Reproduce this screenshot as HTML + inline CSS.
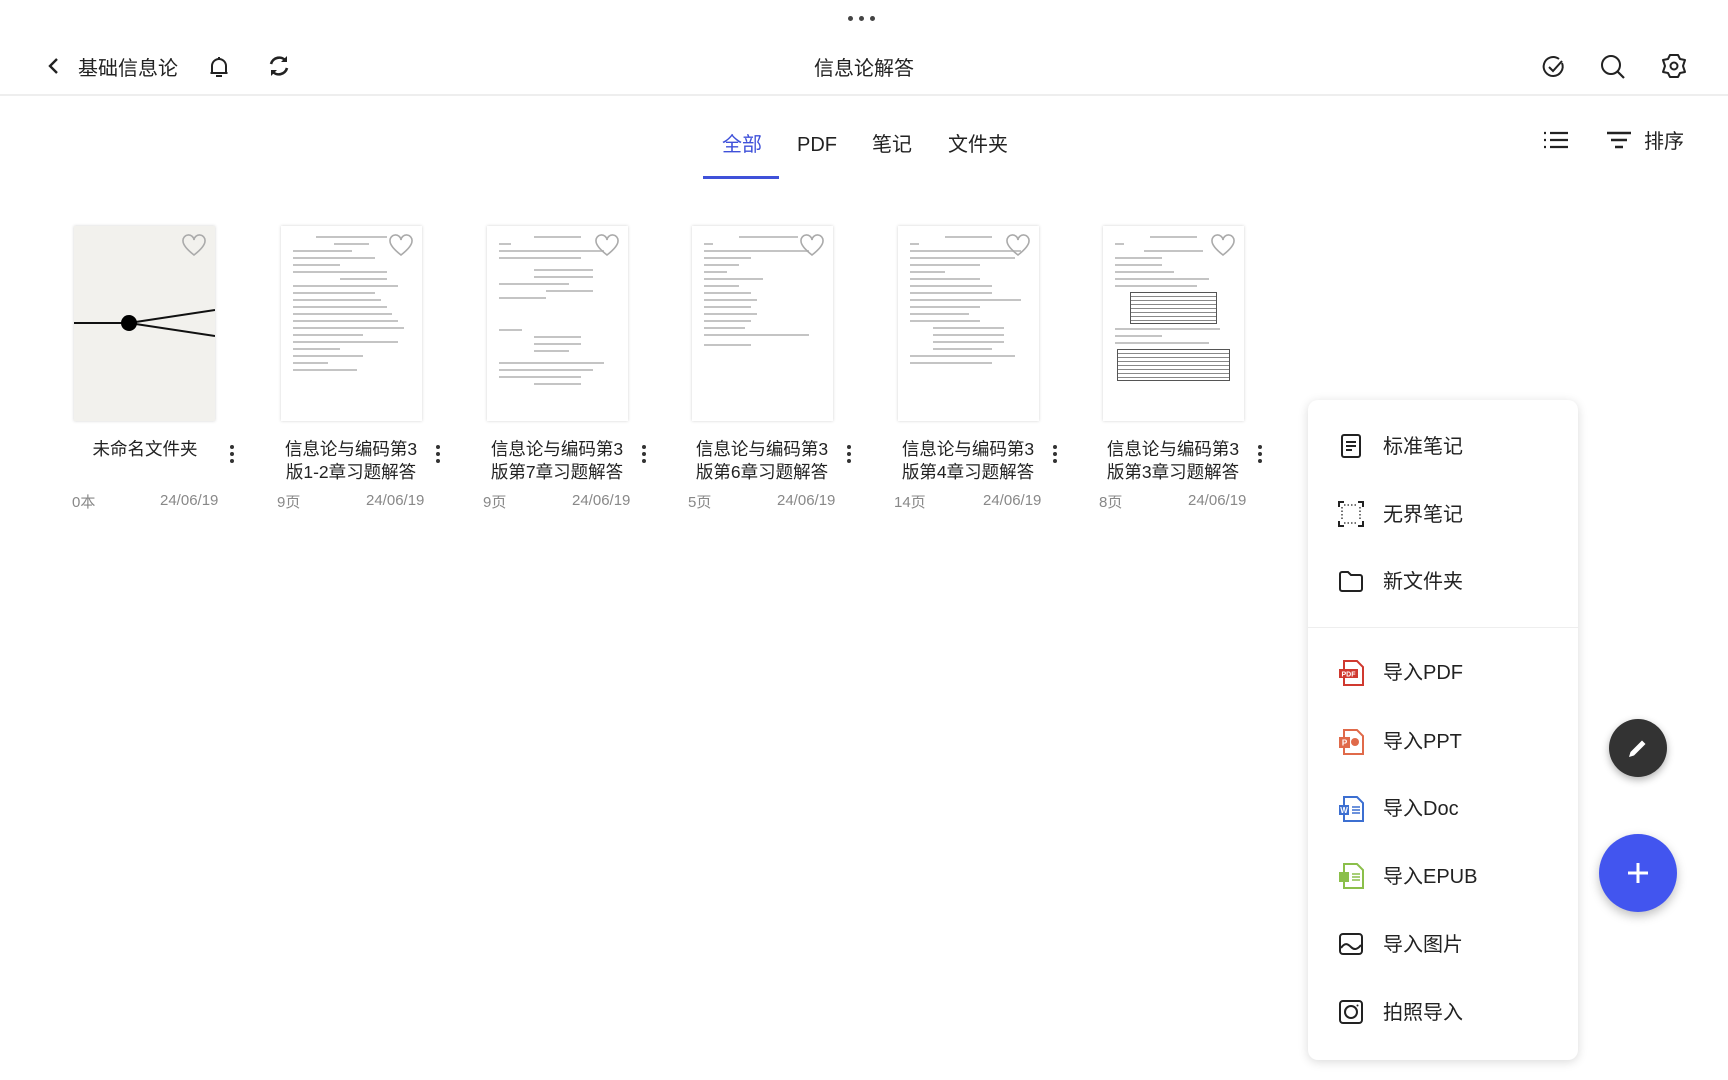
<!DOCTYPE html>
<html><head><meta charset="utf-8">
<style>
*{margin:0;padding:0;box-sizing:border-box}
body{width:1728px;height:1080px;background:#fff;font-family:"Liberation Sans","Noto Sans CJK SC",sans-serif;color:#222;position:relative;overflow:hidden}
.abs{position:absolute}
.hdr{font-size:20px;color:#222;line-height:28px}
.tab{position:absolute;top:131px;font-size:20px;line-height:28px;color:#222}
.card{position:absolute;top:226px;width:141px;height:195px;background:#fff;box-shadow:0 0 3px rgba(0,0,0,.18);overflow:hidden;padding:10px 12px}
.ln{height:2px;background:#c4c4c4;margin:0 0 5px 0}
.heart{position:absolute;top:8px;right:8px}
.title{position:absolute;top:438px;width:150px;text-align:center;font-size:17.5px;line-height:23px;color:#222}
.dots{position:absolute;top:445px;width:4px}
.dots i{display:block;width:4px;height:4px;border-radius:2px;background:#333;margin-bottom:3px}
.meta{position:absolute;top:491px;font-size:15px;color:#888}
.menu{position:absolute;left:1308px;top:400px;width:270px;height:660px;background:#fff;border-radius:10px;box-shadow:0 2px 10px rgba(0,0,0,.15)}
.mi{position:absolute;left:75px;font-size:20px;line-height:28px;color:#222}
.ic{position:absolute;left:30px}
</style></head><body>
<div class="abs" style="left:848px;top:16px;font-size:0">
<span style="display:inline-block;width:5px;height:5px;border-radius:3px;background:#444;margin-right:6px"></span><span style="display:inline-block;width:5px;height:5px;border-radius:3px;background:#444;margin-right:6px"></span><span style="display:inline-block;width:5px;height:5px;border-radius:3px;background:#444"></span>
</div>
<svg class="abs" style="left:46px;top:56px" width="16" height="20" viewBox="0 0 16 20"><path d="M11 3L4 10l7 7" fill="none" stroke="#222" stroke-width="2.4"/></svg>
<div class="abs hdr" style="left:78px;top:55px">基础信息论</div>
<svg class="abs" style="left:206px;top:54px" width="26" height="26" viewBox="0 0 26 26"><path d="M6 19V12a7 7 0 0 1 14 0v7H4.5h17M10 22h6M13 3v2" fill="none" stroke="#222" stroke-width="2"/></svg>
<svg class="abs" style="left:266px;top:53px" width="26" height="26" viewBox="0 0 26 26"><path d="M5 11a8.5 8.5 0 0 1 15-3M21 15a8.5 8.5 0 0 1-15 3" fill="none" stroke="#222" stroke-width="2.6"/><path d="M21 3v6h-6z" fill="#222"/><path d="M5 23v-6h6z" fill="#222"/></svg>
<div class="abs hdr" style="left:814px;top:55px">信息论解答</div>
<svg class="abs" style="left:1541px;top:54px" width="26" height="26" viewBox="0 0 26 26"><path d="M21 9a9.5 9.5 0 1 1-3-4" fill="none" stroke="#222" stroke-width="2"/><path d="M8 13l4 4 9-10" fill="none" stroke="#222" stroke-width="2"/></svg>
<svg class="abs" style="left:1599px;top:53px" width="28" height="28" viewBox="0 0 28 28"><circle cx="12" cy="12" r="9" fill="none" stroke="#222" stroke-width="2"/><path d="M18.5 18.5L25 25" stroke="#222" stroke-width="2.2"/></svg>
<svg class="abs" style="left:1660px;top:52px" width="28" height="28" viewBox="0 0 28 28"><path d="M10 3h8l2 4 5 1-2 6 2 6-5 1-2 4h-8l-2-4-5-1 2-6-2-6 5-1z" fill="none" stroke="#222" stroke-width="2" stroke-linejoin="round"/><circle cx="14" cy="14" r="3.5" fill="none" stroke="#222" stroke-width="2"/></svg>
<div class="abs" style="left:0;top:94px;width:1728px;height:2px;background:#eee"></div>

<div class="tab" style="left:722px;color:#3f51d9">全部</div>
<div class="tab" style="left:797px">PDF</div>
<div class="tab" style="left:872px">笔记</div>
<div class="tab" style="left:948px">文件夹</div>
<div class="abs" style="left:703px;top:176px;width:76px;height:3px;background:#3f51d9"></div>
<svg class="abs" style="left:1543px;top:130px" width="26" height="20" viewBox="0 0 26 20"><path d="M1 3h2M7 3h18M1 10h2M7 10h18M1 17h2M7 17h18" stroke="#222" stroke-width="2.2"/></svg>
<svg class="abs" style="left:1606px;top:130px" width="26" height="20" viewBox="0 0 26 20"><path d="M1 3h24M5 10h16M9 17h8" stroke="#222" stroke-width="2.4"/></svg>
<div class="abs" style="left:1644px;top:128px;font-size:20px;line-height:28px">排序</div>

<div class="card" style="left:74px;background:#f2f1ed;padding:0">
<svg class="abs" style="left:0;top:0" width="141" height="195" viewBox="0 0 141 195"><path d="M0 97h55M55 97L141 84M55 97L141 110" stroke="#111" stroke-width="2"/><circle cx="55" cy="97" r="8" fill="#000"/></svg>
<svg class="heart" width="26" height="24" viewBox="0 0 26 24"><path d="M13 21C4 14 2 10 2 7a5.5 5.5 0 0 1 11-1 5.5 5.5 0 0 1 11 1c0 3-2 7-11 14z" fill="none" stroke="#aaa" stroke-width="1.6"/></svg>
</div>
<div class="title" style="left:70px">未命名文件夹</div>
<div class="dots" style="left:230px"><i></i><i></i><i></i></div>
<div class="meta" style="left:72px">0本</div><div class="meta" style="left:160px;top:492px">24/06/19</div>

<div class="card" style="left:281px"><div class="ln" style="width:60%;margin-left:20%"></div><div class="ln" style="width:30%;margin-left:35%"></div><div class="ln" style="width:50%"></div><div class="ln" style="width:70%"></div><div class="ln" style="width:40%"></div><div class="ln" style="width:80%"></div><div class="ln" style="width:40%;margin-left:40%"></div><div class="ln" style="width:90%"></div><div class="ln" style="width:70%"></div><div class="ln" style="width:75%"></div><div class="ln" style="width:80%"></div><div class="ln" style="width:85%"></div><div class="ln" style="width:90%"></div><div class="ln" style="width:95%"></div><div class="ln" style="width:60%"></div><div class="ln" style="width:90%"></div><div class="ln" style="width:40%"></div><div class="ln" style="width:60%"></div><div class="ln" style="width:30%"></div><div class="ln" style="width:55%"></div>
<svg class="heart" width="26" height="24" viewBox="0 0 26 24"><path d="M13 21C4 14 2 10 2 7a5.5 5.5 0 0 1 11-1 5.5 5.5 0 0 1 11 1c0 3-2 7-11 14z" fill="none" stroke="#aaa" stroke-width="1.6"/></svg></div>
<div class="title" style="left:276px">信息论与编码第3<br>版1-2章习题解答</div>
<div class="dots" style="left:436px"><i></i><i></i><i></i></div>
<div class="meta" style="left:277px">9页</div><div class="meta" style="left:366px;top:492px">24/06/19</div>

<div class="card" style="left:487px"><div class="ln" style="width:40%;margin-left:30%"></div><div class="ln" style="width:10%"></div><div class="ln" style="width:90%"></div><div class="ln" style="width:70%"></div><div class="ln" style="width:50%;margin-left:30%;margin-top:10px"></div><div class="ln" style="width:50%;margin-left:30%"></div><div class="ln" style="width:60%"></div><div class="ln" style="width:40%;margin-left:40%"></div><div class="ln" style="width:40%"></div><div class="ln" style="width:20%;margin-top:30px"></div><div class="ln" style="width:40%;margin-left:30%"></div><div class="ln" style="width:40%;margin-left:30%"></div><div class="ln" style="width:30%;margin-left:30%"></div><div class="ln" style="width:90%;margin-top:10px"></div><div class="ln" style="width:80%"></div><div class="ln" style="width:70%"></div><div class="ln" style="width:40%;margin-left:30%"></div>
<svg class="heart" width="26" height="24" viewBox="0 0 26 24"><path d="M13 21C4 14 2 10 2 7a5.5 5.5 0 0 1 11-1 5.5 5.5 0 0 1 11 1c0 3-2 7-11 14z" fill="none" stroke="#aaa" stroke-width="1.6"/></svg></div>
<div class="title" style="left:482px">信息论与编码第3<br>版第7章习题解答</div>
<div class="dots" style="left:642px"><i></i><i></i><i></i></div>
<div class="meta" style="left:483px">9页</div><div class="meta" style="left:572px;top:492px">24/06/19</div>

<div class="card" style="left:692px"><div class="ln" style="width:50%;margin-left:30%"></div><div class="ln" style="width:8%"></div><div class="ln" style="width:90%"></div><div class="ln" style="width:40%"></div><div class="ln" style="width:30%"></div><div class="ln" style="width:20%"></div><div class="ln" style="width:50%"></div><div class="ln" style="width:30%"></div><div class="ln" style="width:40%"></div><div class="ln" style="width:45%"></div><div class="ln" style="width:40%"></div><div class="ln" style="width:45%"></div><div class="ln" style="width:40%"></div><div class="ln" style="width:35%"></div><div class="ln" style="width:90%"></div><div class="ln" style="width:40%;margin-top:8px"></div>
<svg class="heart" width="26" height="24" viewBox="0 0 26 24"><path d="M13 21C4 14 2 10 2 7a5.5 5.5 0 0 1 11-1 5.5 5.5 0 0 1 11 1c0 3-2 7-11 14z" fill="none" stroke="#aaa" stroke-width="1.6"/></svg></div>
<div class="title" style="left:687px">信息论与编码第3<br>版第6章习题解答</div>
<div class="dots" style="left:847px"><i></i><i></i><i></i></div>
<div class="meta" style="left:688px">5页</div><div class="meta" style="left:777px;top:492px">24/06/19</div>

<div class="card" style="left:898px"><div class="ln" style="width:40%;margin-left:30%"></div><div class="ln" style="width:8%"></div><div class="ln" style="width:95%"></div><div class="ln" style="width:90%"></div><div class="ln" style="width:60%"></div><div class="ln" style="width:30%"></div><div class="ln" style="width:60%"></div><div class="ln" style="width:70%"></div><div class="ln" style="width:70%"></div><div class="ln" style="width:95%"></div><div class="ln" style="width:60%"></div><div class="ln" style="width:50%"></div><div class="ln" style="width:60%"></div><div class="ln" style="width:60%;margin-left:20%"></div><div class="ln" style="width:60%;margin-left:20%"></div><div class="ln" style="width:60%;margin-left:20%"></div><div class="ln" style="width:50%;margin-left:20%"></div><div class="ln" style="width:90%"></div><div class="ln" style="width:70%"></div>
<svg class="heart" width="26" height="24" viewBox="0 0 26 24"><path d="M13 21C4 14 2 10 2 7a5.5 5.5 0 0 1 11-1 5.5 5.5 0 0 1 11 1c0 3-2 7-11 14z" fill="none" stroke="#aaa" stroke-width="1.6"/></svg></div>
<div class="title" style="left:893px">信息论与编码第3<br>版第4章习题解答</div>
<div class="dots" style="left:1053px"><i></i><i></i><i></i></div>
<div class="meta" style="left:894px">14页</div><div class="meta" style="left:983px;top:492px">24/06/19</div>

<div class="card" style="left:1103px"><div class="ln" style="width:40%;margin-left:30%"></div><div class="ln" style="width:8%"></div><div class="ln" style="width:50%;margin-left:25%"></div><div class="ln" style="width:40%"></div><div class="ln" style="width:40%"></div><div class="ln" style="width:50%"></div><div class="ln" style="width:80%"></div><div class="ln" style="width:70%"></div>
<div style="margin:4px 15px;height:32px;border:1px solid #555;background:repeating-linear-gradient(#fff 0 3px,#888 3px 4px)"></div><div class="ln" style="width:90%"></div><div class="ln" style="width:40%"></div><div class="ln" style="width:80%"></div>
<div style="margin:2px 2px;height:32px;border:1px solid #555;background:repeating-linear-gradient(#fff 0 3px,#888 3px 4px)"></div>
<svg class="heart" width="26" height="24" viewBox="0 0 26 24"><path d="M13 21C4 14 2 10 2 7a5.5 5.5 0 0 1 11-1 5.5 5.5 0 0 1 11 1c0 3-2 7-11 14z" fill="none" stroke="#aaa" stroke-width="1.6"/></svg></div>
<div class="title" style="left:1098px">信息论与编码第3<br>版第3章习题解答</div>
<div class="dots" style="left:1258px"><i></i><i></i><i></i></div>
<div class="meta" style="left:1099px">8页</div><div class="meta" style="left:1188px;top:492px">24/06/19</div>

<div class="menu">
<svg class="ic" style="top:33px" width="26" height="26" viewBox="0 0 26 26"><rect x="4" y="2" width="18" height="22" rx="2" fill="none" stroke="#222" stroke-width="2"/><path d="M8 9h10M8 13h10M8 17h6" stroke="#222" stroke-width="2"/></svg>
<div class="mi" style="top:33px">标准笔记</div>
<svg class="ic" style="top:101px" width="26" height="26" viewBox="0 0 26 26"><path d="M1 6V1h5M20 1h5v5M25 20v5h-5M6 25H1v-5" fill="none" stroke="#222" stroke-width="2"/><path d="M6 4h14M22 6v14M6 22h14M4 6v14" stroke="#222" stroke-width="1.3" stroke-dasharray="1.5 2"/></svg>
<div class="mi" style="top:101px">无界笔记</div>
<svg class="ic" style="top:169px" width="26" height="26" viewBox="0 0 26 26"><path d="M2 5a2 2 0 0 1 2-2h6l3 3h9a2 2 0 0 1 2 2v12a2 2 0 0 1-2 2H4a2 2 0 0 1-2-2z" fill="none" stroke="#222" stroke-width="2"/></svg>
<div class="mi" style="top:168px">新文件夹</div>
<div class="abs" style="left:0;top:227px;width:270px;height:1px;background:#eee"></div>
<svg class="ic" style="top:259px" width="28" height="28" viewBox="0 0 28 28"><path d="M6 2h13l6 6v18H6z" fill="#fff" stroke="#d0392f" stroke-width="2"/><rect x="1" y="10" width="19" height="9" fill="#d0392f"/><text x="10.5" y="17.5" font-size="7" fill="#fff" text-anchor="middle" font-family="Liberation Sans" font-weight="bold">PDF</text></svg>
<div class="mi" style="top:259px">导入PDF</div>
<svg class="ic" style="top:328px" width="28" height="28" viewBox="0 0 28 28"><path d="M6 2h13l6 6v18H6z" fill="#fff" stroke="#e06a4a" stroke-width="2"/><rect x="1" y="9" width="11" height="11" fill="#e06a4a"/><text x="6.5" y="17.5" font-size="8" fill="#fff" text-anchor="middle" font-family="Liberation Sans" font-weight="bold">P</text><circle cx="17" cy="14" r="4" fill="#e06a4a"/></svg>
<div class="mi" style="top:328px">导入PPT</div>
<svg class="ic" style="top:395px" width="28" height="28" viewBox="0 0 28 28"><path d="M6 2h13l6 6v18H6z" fill="#fff" stroke="#3c6fd1" stroke-width="2"/><rect x="1" y="10" width="10" height="10" fill="#3c6fd1"/><text x="6" y="18" font-size="8" fill="#fff" text-anchor="middle" font-family="Liberation Sans" font-weight="bold">W</text><path d="M14 12h8M14 15h8M14 18h8" stroke="#3c6fd1" stroke-width="1.5"/></svg>
<div class="mi" style="top:395px">导入Doc</div>
<svg class="ic" style="top:462px" width="28" height="28" viewBox="0 0 28 28"><path d="M6 2h13l6 6v18H6z" fill="#fff" stroke="#8bbf4a" stroke-width="2"/><rect x="1" y="10" width="10" height="10" fill="#8bbf4a"/><path d="M14 12h8M14 15h8M14 18h8" stroke="#8bbf4a" stroke-width="1.5"/></svg>
<div class="mi" style="top:463px">导入EPUB</div>
<svg class="ic" style="top:531px" width="26" height="26" viewBox="0 0 26 26"><rect x="2" y="3" width="22" height="20" rx="3" fill="none" stroke="#222" stroke-width="2"/><path d="M3 17c4-6 7-4 10-1s6 3 10-2" fill="none" stroke="#222" stroke-width="2"/></svg>
<div class="mi" style="top:531px">导入图片</div>
<svg class="ic" style="top:599px" width="26" height="26" viewBox="0 0 26 26"><rect x="2" y="2" width="22" height="22" rx="3" fill="none" stroke="#222" stroke-width="2"/><circle cx="13" cy="13" r="6" fill="none" stroke="#222" stroke-width="2"/><circle cx="19.5" cy="6.5" r="1" fill="#222"/></svg>
<div class="mi" style="top:599px">拍照导入</div>
</div>

<div class="abs" style="left:1609px;top:719px;width:58px;height:58px;border-radius:50%;background:#333;box-shadow:0 3px 8px rgba(0,0,0,.3)">
<svg class="abs" style="left:17px;top:17px" width="24" height="24" viewBox="0 0 24 24"><path d="M3 21l1.5-5L16 4.5l3.5 3.5L8 19.5z" fill="#fff"/></svg></div>
<div class="abs" style="left:1599px;top:834px;width:78px;height:78px;border-radius:50%;background:#4255ef;box-shadow:0 4px 10px rgba(0,0,0,.25)">
<svg class="abs" style="left:27px;top:27px" width="24" height="24" viewBox="0 0 24 24"><path d="M12 2v20M2 12h20" stroke="#fff" stroke-width="3"/></svg></div>
</body></html>
